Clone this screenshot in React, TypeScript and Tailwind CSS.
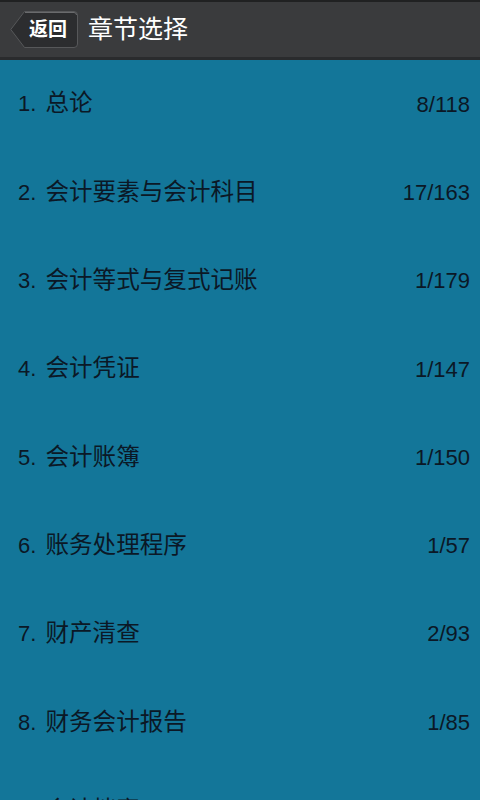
const chapters = [
  { title: "总论", progress: "8/118" },
  { title: "会计要素与会计科目", progress: "17/163" },
  { title: "会计等式与复式记账", progress: "1/179" },
  { title: "会计凭证", progress: "1/147" },
  { title: "会计账簿", progress: "1/150" },
  { title: "账务处理程序", progress: "1/57" },
  { title: "财产清查", progress: "2/93" },
  { title: "财务会计报告", progress: "1/85" },
  { title: "会计档案", progress: "1/40" },
];

const font = {
  fontFamily: '"Liberation Sans", "Noto Sans CJK SC", sans-serif',
};

function BackButton() {
  return (
    <button className="relative w-[68px] h-[37px] flex items-center justify-center">
      <svg
        className="absolute inset-0"
        width="68"
        height="37"
        viewBox="0 0 68 37"
      >
        <path
          d="M14.5 0.5 H64 a3.5 3.5 0 0 1 3.5 3.5 V33 a3.5 3.5 0 0 1 -3.5 3.5 H14.5 L0.8 18.5 Z"
          fill="#2c2d2f"
          stroke="#57585a"
        />
        <path
          d="M15 1.5 H64 a2.5 2.5 0 0 1 2.5 2.5"
          fill="none"
          stroke="#6a6b6d"
        />
      </svg>
      <span className="relative pl-[8px] text-white text-[19px] font-bold leading-none">
        返回
      </span>
    </button>
  );
}

export default function App() {
  return (
    <div className="w-[480px] h-[800px] overflow-hidden bg-[#137699]" style={font}>
      <header className="h-[60px] bg-[#3a3b3d] border-t-2 border-t-[#202122] border-b-[3px] border-b-[#2a2b2d] flex items-center pl-[10px] gap-[10px]">
        <BackButton />
        <h1 className="text-white text-[25px] leading-none">章节选择</h1>
      </header>
      <ul>
        {chapters.map((c, i) => (
          <li
            key={c.title}
            className="h-[88.3px] flex items-center justify-between pl-[18px] pr-[10px] text-[#0b1826] text-[22px]"
          >
            <span className="flex items-baseline">
              <span>{i + 1}.</span>
              <span className="ml-[9px] text-[23.6px]">{c.title}</span>
            </span>
            <span>{c.progress}</span>
          </li>
        ))}
      </ul>
    </div>
  );
}
